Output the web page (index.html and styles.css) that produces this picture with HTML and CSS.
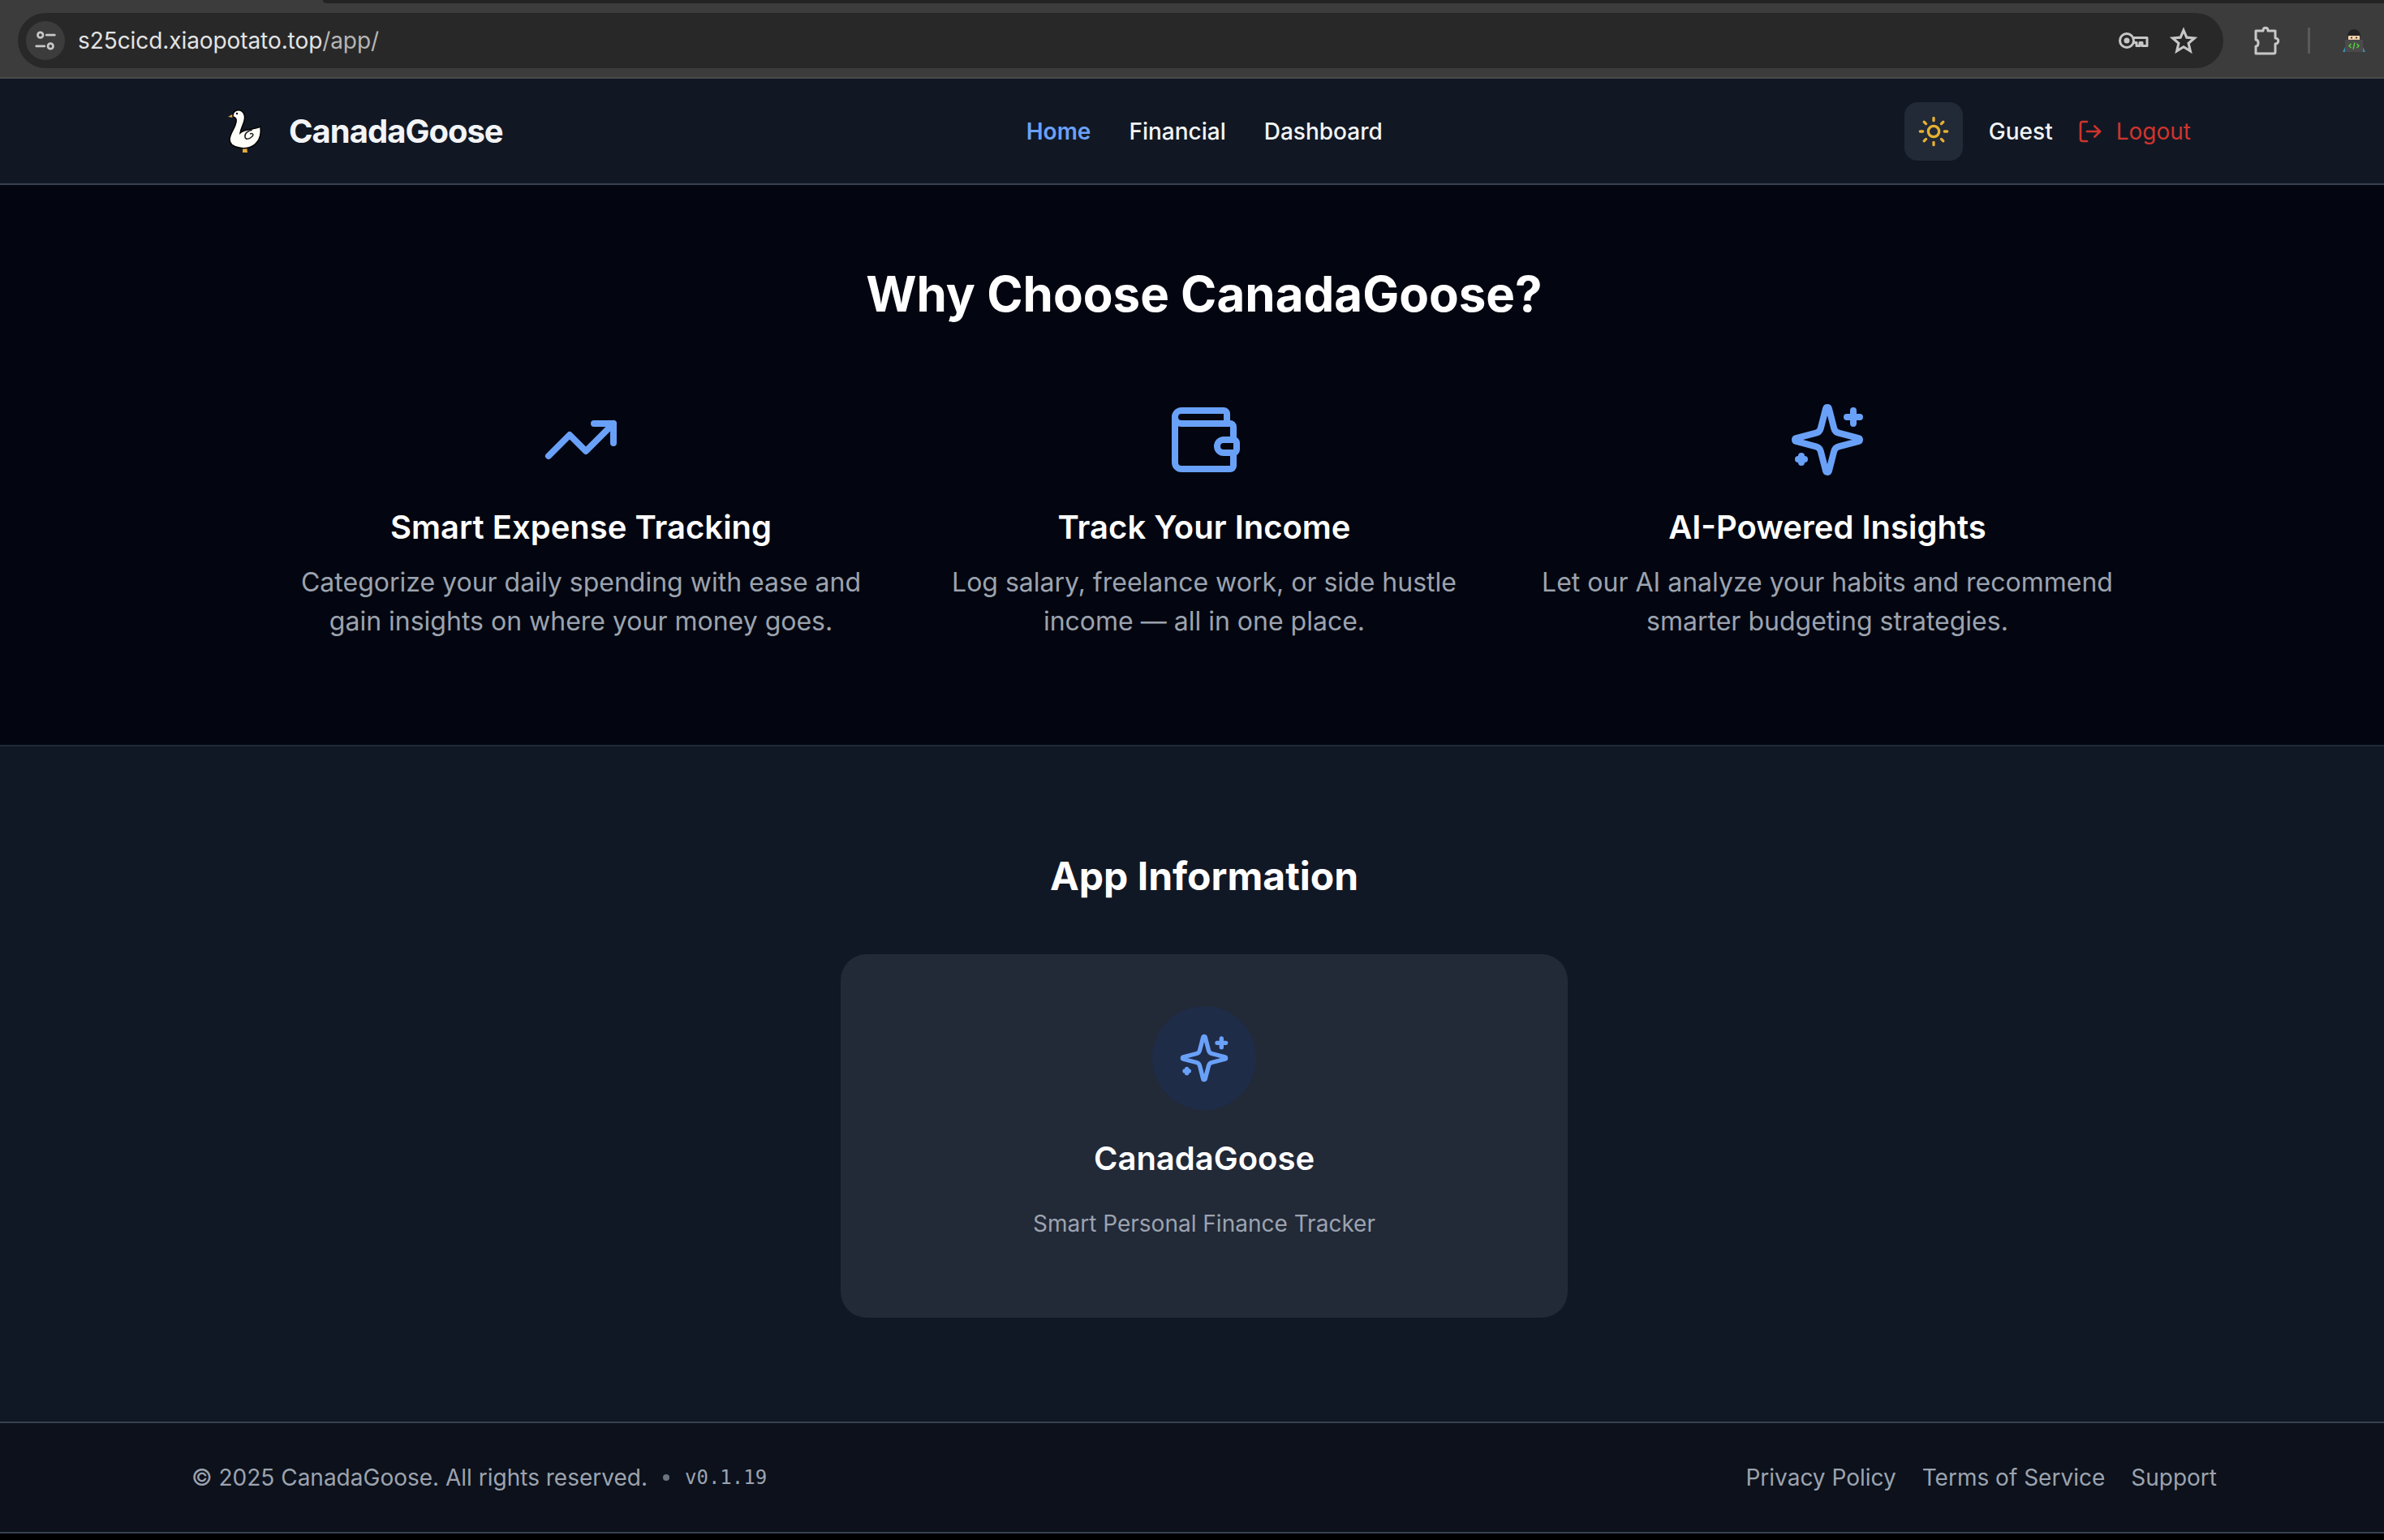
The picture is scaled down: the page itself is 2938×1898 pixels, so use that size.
FILE: index.html
```html
<!DOCTYPE html>
<html lang="en">
<head>
    <link rel="stylesheet" href="styles.css">
    <meta charset="UTF-8">
    <title>CanadaGoose</title>
</head>
<body>
<div class="chrome">
    <div class="tabstrip"><div class="tab-edge"></div></div>
    <div class="toolbar">
        <div class="omnibox">
            <div class="site-info">
                <svg width="30" height="30" viewBox="0 0 24 24" fill="none" stroke="#c7c7c7" stroke-width="2.2" stroke-linecap="round"><circle cx="7" cy="6.5" r="2.6"/><path d="M13 6.5h8"/><circle cx="17" cy="17.5" r="2.6"/><path d="M3 17.5h8"/></svg>
            </div>
            <div class="url">s25cicd.xiaopotato.top<span class="url-path">/app/</span></div>
            <svg class="omni-key" width="38" height="24" viewBox="0 0 38 24" fill="none" stroke="#c7c7c7" stroke-width="3"><circle cx="11" cy="12" r="8.5"/><circle cx="11" cy="12" r="3.500" fill="#c7c7c7" stroke="none"/><path d="M19.5 8.5H36v10h-6v-4h-3v4h-4v-4h-3.500" stroke-linejoin="round"/></svg>
            <svg class="omni-star" width="34" height="34" viewBox="0 0 24 24" fill="none" stroke="#c7c7c7" stroke-width="2.200" stroke-linejoin="miter"><path d="M12 3l2.700 6.300 6.800.6-5.200 4.500 1.600 6.700L12 17.500l-5.900 3.600 1.600-6.700-5.200-4.500 6.800-.6z"/></svg>
        </div>
        <svg class="puzzle" width="36" height="38" viewBox="0 0 36 38" fill="none" stroke="#c7c7c7" stroke-width="3" stroke-linejoin="round"><path d="M4 7h9c0-5 6-5 6 0h9v9c5 0 5 7 0 7v10a2 2 0 0 1-2 2H4v-9c4 0 4-8 0-8z"/></svg>
        <div class="tool-sep"></div>
        <svg class="avatar" width="28" height="28" viewBox="0 0 28 28"><path d="M3 22h22l3 6H0z" fill="#3a8fb0"/><path d="M6 9c0-12 16-12 16 0z" fill="#222"/><rect x="7" y="8" width="14" height="6" fill="#f0cfa8"/><circle cx="11" cy="10.500" r="1" fill="#222"/><circle cx="17" cy="10.500" r="1" fill="#222"/><rect x="3" y="13" width="22" height="15" fill="#4a4a4a"/><path d="M10.500 18l-2.500 2.500 2.500 2.500M17.500 18l2.500 2.500-2.500 2.500M15 16.500l-2 8" stroke="#4fd13a" stroke-width="1.500" fill="none"/></svg>
    </div>
</div>

<div class="page">
    <header class="site-header">
        <a class="brand">
            <svg class="goose" width="44" height="56" viewBox="0 0 44 56">
                <path d="M8 6 L1 10 L8 11Z" fill="#e8a93a"/>
                <path d="M19 47h5l1 7h-6z" fill="#e8a93a"/>
                <path d="M7 8C7 3 12 1 16 2c4 1 6 6 5.500 10C21 18 17 23 16 30c3-3 8-4 14-5 4-.5 8-1 11-3 1 8 0 15-5 20-5 6-14 8-21 6-7-1-12-4-12-10 0-6 5-12 7-18 2-5 2-9-3-10z" fill="#fffdf7" stroke="#000" stroke-width="1.500"/>
                <circle cx="12" cy="6" r="1.200" fill="#000"/>
                <path d="M31 26c-6 1-10 5-9 9 1 4 6 2 9-1 2-3 0-4-3-3" fill="none" stroke="#222" stroke-width="1.500"/>
            </svg>
            <span class="brand-name">CanadaGoose</span>
        </a>
        <nav class="main-nav">
            <a class="active">Home</a>
            <a>Financial</a>
            <a>Dashboard</a>
        </nav>
        <div class="user-area">
            <button class="theme-btn">
                <svg width="40" height="40" viewBox="0 0 24 24" fill="none" stroke="#e5b032" stroke-width="2" stroke-linecap="round" stroke-linejoin="round"><circle cx="12" cy="12" r="4"/><path d="M12 2v2M12 20v2M4.930 4.930l1.410 1.410M17.660 17.660l1.410 1.410M2 12h2M20 12h2M6.340 17.660l-1.410 1.410M19.070 4.930l-1.410 1.410"/></svg>
            </button>
            <span class="guest">Guest</span>
            <a class="logout">
                <svg width="32" height="32" viewBox="0 0 24 24" fill="none" stroke="currentColor" stroke-width="2" stroke-linecap="round" stroke-linejoin="round"><path d="M9 21H5a2 2 0 0 1-2-2V5a2 2 0 0 1 2-2h4"/><path d="M16 17l5-5-5-5"/><path d="M21 12H9"/></svg>
                Logout
            </a>
        </div>
    </header>

    <section class="hero">
        <h1>Why Choose CanadaGoose?</h1>
        <div class="features">
            <div class="feature">
                <svg class="feature-icon" viewBox="0 0 24 24"><path d="M22 7l-8.500 8.500-5-5L2 17"/><path d="M16 7h6v6"/></svg>
                <h3>Smart Expense Tracking</h3>
                <p>Categorize your daily spending with ease and gain insights on where your money goes.</p>
            </div>
            <div class="feature">
                <svg class="feature-icon" viewBox="0 0 24 24"><path d="M19 7V4a1 1 0 0 0-1-1H5a2 2 0 0 0 0 4h15a1 1 0 0 1 1 1v4h-3a2 2 0 0 0 0 4h3a1 1 0 0 0 1-1v-2a1 1 0 0 0-1-1"/><path d="M3 5v14a2 2 0 0 0 2 2h15a1 1 0 0 0 1-1v-4"/></svg>
                <h3>Track Your Income</h3>
                <p>Log salary, freelance work, or side hustle income — all in one place.</p>
            </div>
            <div class="feature">
                <svg class="feature-icon" viewBox="0 0 24 24"><path d="M9.937 15.500A2 2 0 0 0 8.500 14.063l-6.135-1.582a.5.5 0 0 1 0-.962L8.500 9.936A2 2 0 0 0 9.937 8.500l1.582-6.135a.5.5 0 0 1 .963 0L14.063 8.500A2 2 0 0 0 15.500 9.937l6.135 1.581a.5.5 0 0 1 0 .964L15.500 14.063a2 2 0 0 0-1.437 1.437l-1.582 6.135a.5.5 0 0 1-.963 0z"/><path d="M20 3v4M22 5h-4M4 17v2M5 18H3"/></svg>
                <h3>AI-Powered Insights</h3>
                <p>Let our AI analyze your habits and recommend smarter budgeting strategies.</p>
            </div>
        </div>
    </section>

    <section class="app-info">
        <h2>App Information</h2>
        <div class="info-card">
            <div class="info-circle">
                <svg class="info-icon" viewBox="0 0 24 24"><path d="M9.937 15.500A2 2 0 0 0 8.500 14.063l-6.135-1.582a.5.5 0 0 1 0-.962L8.500 9.936A2 2 0 0 0 9.937 8.500l1.582-6.135a.5.5 0 0 1 .963 0L14.063 8.500A2 2 0 0 0 15.500 9.937l6.135 1.581a.5.5 0 0 1 0 .964L15.500 14.063a2 2 0 0 0-1.437 1.437l-1.582 6.135a.5.5 0 0 1-.963 0z"/><path d="M20 3v4M22 5h-4M4 17v2M5 18H3"/></svg>
            </div>
            <h3>CanadaGoose</h3>
            <p>Smart Personal Finance Tracker</p>
        </div>
    </section>

    <footer class="site-footer">
        <div class="copyright">
            <span>© 2025 CanadaGoose. All rights reserved.</span>
            <span class="dot"></span>
            <span class="version">v0.1.19</span>
        </div>
        <div class="footer-links">
            <a>Privacy Policy</a>
            <a>Terms of Service</a>
            <a>Support</a>
        </div>
    </footer>
</div>
</body>
</html>
```

FILE: styles.css
```css
* {
    box-sizing: border-box;
}
html, body {
    margin: 0;
    height: 1898px;
    overflow: hidden;
    background: #000;
}
body {
    font-family: Inter, "Liberation Sans", sans-serif;
    color: #f3f4f6;
}
a {
    text-decoration: none;
}
h1, h2, h3, p {
    margin: 0;
}

/* browser bar */
.chrome {
    height: 97px;
    background: #3c3c3c;
    border-bottom: 2px solid #4a4a4a;
}
.tabstrip {
    height: 4px;
    display: flex;
    justify-content: flex-end;
}
.tab-edge {
    width: 2540px;
    background: #222322;
    border-radius: 0 0 0 10px;
}
.toolbar {
    display: flex;
    align-items: center;
    height: 68px;
    margin-top: 12px;
    padding-left: 22px;
}
.omnibox {
    width: 2718px;
    height: 68px;
    border-radius: 34px;
    background: #282828;
    display: flex;
    align-items: center;
    padding: 0 32px 0 10px;
}
.site-info {
    width: 48px;
    height: 48px;
    border-radius: 50%;
    background: #3c3c3c;
    display: flex;
    align-items: center;
    justify-content: center;
}
.url {
    margin-left: 16px;
    font-size: 28px;
    letter-spacing: -0.08px;
    color: #e3e3e3;
    flex: 1;
}
.url-path {
    color: #b5b5b5;
}
.omni-key {
    margin-right: 26px;
}
.puzzle {
    margin-left: 36px;
}
.tool-sep {
    width: 3px;
    height: 32px;
    margin-left: 32px;
    background: #5a5a5a;
}
.avatar {
    margin-left: 40px;
}

/* page */
.page {
    width: 2968px;
}
.site-header {
    height: 131px;
    background: #111824;
    border-bottom: 2px solid #374151;
    display: flex;
    align-items: center;
    justify-content: space-between;
    padding: 0 268px 0 280px;
}
.brand {
    display: flex;
    align-items: center;
    gap: 32px;
}
.brand-name {
    font-size: 40px;
    font-weight: 700;
    letter-spacing: -1px;
    color: #f3f4f6;
}
.main-nav {
    display: flex;
    gap: 47px;
    margin-left: 2px;
    font-size: 28px;
    font-weight: 500;
    color: #f3f4f6;
}
.main-nav .active {
    color: #6aa1f8;
    font-weight: 600;
}
.user-area {
    display: flex;
    align-items: center;
    font-size: 28px;
    font-weight: 500;
}
.theme-btn {
    width: 72px;
    height: 72px;
    border: 0;
    border-radius: 16px;
    background: #222937;
    display: flex;
    align-items: center;
    justify-content: center;
    padding: 0;
}
.guest {
    margin-left: 32px;
    color: #f3f4f6;
}
.logout {
    margin-left: 30px;
    display: flex;
    align-items: center;
    gap: 16px;
    color: #d0342c;
    font-weight: 400;
}

.hero {
    height: 692px;
    background: #030610;
    border-bottom: 2px solid #1f2937;
    padding-top: 98px;
    text-align: center;
}
.hero h1 {
    font-size: 60px;
    line-height: 72px;
    font-weight: 700;
    color: #fff;
}
.features {
    display: grid;
    grid-template-columns: repeat(3, 736px);
    gap: 32px;
    justify-content: center;
    margin-top: 96px;
}
.feature-icon {
    display: block;
    width: 96px;
    height: 96px;
    margin: 0 auto 32px;
    fill: none;
    stroke: #6aa1f8;
    stroke-width: 2;
    stroke-linecap: round;
    stroke-linejoin: round;
}
.feature h3 {
    font-size: 40px;
    line-height: 56px;
    font-weight: 600;
    color: #fff;
}
.feature p {
    margin-top: 16px;
    font-size: 32px;
    line-height: 48px;
    color: #9ca3af;
}

.app-info {
    height: 832px;
    background: #111825;
    padding-top: 128px;
    text-align: center;
}
.app-info h2 {
    font-size: 48px;
    line-height: 64px;
    font-weight: 700;
    color: #fff;
}
.info-card {
    width: 896px;
    height: 448px;
    margin: 64px auto 0;
    border-radius: 32px;
    background: #222937;
    padding-top: 64px;
}
.info-circle {
    width: 128px;
    height: 128px;
    margin: 0 auto;
    border-radius: 50%;
    background: #1f2c48;
    display: flex;
    align-items: center;
    justify-content: center;
}
.info-icon {
    width: 64px;
    height: 64px;
    fill: none;
    stroke: #6aa1f8;
    stroke-width: 2;
    stroke-linecap: round;
    stroke-linejoin: round;
}
.info-card h3 {
    margin-top: 32px;
    font-size: 40px;
    line-height: 56px;
    font-weight: 600;
    color: #fff;
}
.info-card p {
    margin-top: 32px;
    font-size: 28px;
    line-height: 40px;
    color: #9ca3af;
}

.site-footer {
    height: 138px;
    background: #0c111b;
    border-top: 2px solid #374151;
    border-bottom: 2px solid #374151;
    display: flex;
    align-items: center;
    justify-content: space-between;
    padding: 0 236px 0 236px;
    font-size: 28px;
    color: #9ca3af;
}
.copyright {
    display: flex;
    align-items: center;
    gap: 19px;
}
.dot {
    width: 8px;
    height: 8px;
    border-radius: 50%;
    background: #6b7280;
}
.version {
    font-family: "DejaVu Sans Mono", "Liberation Mono", monospace;
    font-size: 24px;
}
.footer-links {
    display: flex;
    gap: 32px;
}
```
